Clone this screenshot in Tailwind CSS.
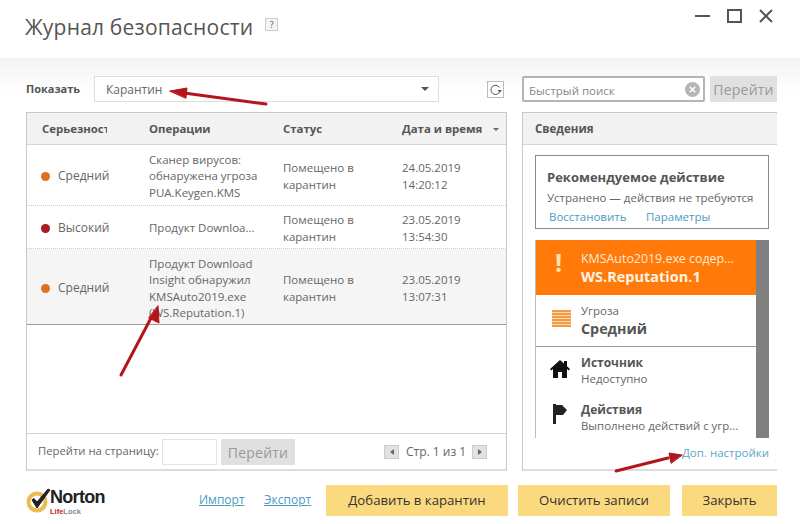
<!DOCTYPE html>
<html lang="ru">
<head>
  <meta charset="UTF-8" />
  <title>Журнал безопасности</title>
  <script src="https://cdn.jsdelivr.net/npm/@tailwindcss/browser@4"></script>
</head>
<body class="bg-white">
<div class="relative w-[800px] h-[524px] overflow-hidden bg-white text-[#666] text-[12px] font-['Open_Sans','Noto_Sans',sans-serif]">

  <!-- Title bar -->
  <header class="h-[58px] flex pl-[25px] pr-[27px]">
    <h1 class="text-[21px] leading-[28px] mt-[13px] text-[#555] tracking-[0.2px]">Журнал безопасности</h1>
    <span class="mt-[18px] ml-[12px] w-[13px] h-[13px] border border-[#ccc] bg-[#f4f4f4] text-[9px] leading-[11px] text-center text-[#555]">?</span>
    <div class="ml-auto flex gap-[17px] mt-[9px] h-[14px]">
      <svg width="15" height="14" viewBox="0 0 15 14"><path d="M0 7h15" stroke="#555" stroke-width="2"/></svg>
      <svg width="15" height="14" viewBox="0 0 15 14"><rect x="1" y="1" width="13" height="12" fill="none" stroke="#555" stroke-width="2"/></svg>
      <svg width="14" height="14" viewBox="0 0 14 14"><path d="M1 1l12 12M13 1L1 13" stroke="#555" stroke-width="2"/></svg>
    </div>
  </header>

  <main class="h-[427px] px-[26px] pr-[23px] pt-[18px] bg-gradient-to-b from-[#f3f3f3] via-white via-[8%] to-white">
    <!-- Toolbar -->
    <div class="flex h-[26px] items-center">
      <span class="w-[68px] font-bold text-[#555] text-[11px]">Показать</span>
      <div class="w-[345px] h-[26px] border border-[#ddd] bg-white flex items-center px-[11px] text-[12px]">
        <span class="mt-[1px]">Карантин</span>
        <span class="ml-auto -mr-[2px] w-0 h-0 border-x-[4px] border-x-transparent border-t-[4px] border-t-[#555]"></span>
      </div>
      <div class="ml-[48px] mt-[1px] w-[17px] h-[17px] border border-[#bbb] bg-white flex items-center justify-center">
        <svg width="13" height="13" viewBox="0 0 13 13"><path d="M10.5 4.500A4.600 4.600 0 1 0 11 8" fill="none" stroke="#555" stroke-width="1"/><path d="M8.500 7h4.500l-2.200 2.600z" fill="#555"/></svg>
      </div>
      <div class="ml-[18px] w-[183px] h-[26px] border-2 border-[#b4b4b4] rounded-[2px] bg-white flex items-center pl-[5px] pr-[3px] text-[11.5px] text-[#888]">
        <span class="mt-[3px]">Быстрый поиск</span>
        <span class="ml-auto w-[15px] h-[15px] rounded-full bg-[#b5b5b5] flex items-center justify-center">
          <svg width="7" height="7" viewBox="0 0 7 7"><path d="M.8.8l5.400 5.400M6.200.8L.8 6.200" stroke="#fff" stroke-width="1.500"/></svg>
        </span>
      </div>
      <div class="ml-[5px] w-[67px] h-[26px] bg-[#e0e0e0] text-[#999] text-[14px] leading-[27px] text-center tracking-[0.2px]">Перейти</div>
    </div>

    <div class="flex gap-[15px] mt-[10px] h-[359px]">
      <!-- Log table -->
      <section class="w-[481px] border border-[#c8c8c8] border-b-2 border-b-[#ddd] flex flex-col bg-white">
        <div class="h-[32px] bg-[#f2f2f2] border-b border-[#d4d4d4] flex items-center font-bold text-[#555] text-[11.400px] shrink-0">
          <div class="w-[122px] pl-[15px]"><div class="w-[65px] overflow-hidden whitespace-nowrap">Серьезность</div></div>
          <div class="w-[134px]">Операции</div>
          <div class="w-[119px]">Статус</div>
          <div class="flex-1 flex items-center">Дата и время<span class="ml-[11px] mt-[2px] w-0 h-0 border-x-[3.500px] border-x-transparent border-t-[3.500px] border-t-[#666]"></span></div>
        </div>

        <div class="h-[61px] pt-[3px] flex items-center border-b border-dotted border-[#ccc] leading-[16.500px] text-[11.500px]">
          <div class="w-[122px] pl-[14px] flex items-center gap-[8px] text-[12px]"><span class="w-[9px] h-[9px] rounded-full bg-[#dc7126]"></span>Средний</div>
          <div class="w-[134px]">Сканер вирусов:<br>обнаружена угроза<br>PUA.Keygen.KMS</div>
          <div class="w-[119px]">Помещено в<br>карантин</div>
          <div class="flex-1">24.05.2019<br>14:20:12</div>
        </div>
        <div class="h-[43px] pt-[3px] flex items-center border-b border-dotted border-[#ccc] leading-[16.500px] text-[11.500px]">
          <div class="w-[122px] pl-[14px] flex items-center gap-[8px] text-[12px]"><span class="w-[9px] h-[9px] rounded-full bg-[#a81c22]"></span>Высокий</div>
          <div class="w-[134px]">Продукт Downloa...</div>
          <div class="w-[119px]">Помещено в<br>карантин</div>
          <div class="flex-1">23.05.2019<br>13:54:30</div>
        </div>
        <div class="h-[76px] pt-[4px] flex items-center bg-[#f5f5f5] border-b border-[#9a9a9a] leading-[16.300px] text-[11.500px]">
          <div class="w-[122px] pl-[14px] flex items-center gap-[8px] text-[12px]"><span class="w-[9px] h-[9px] rounded-full bg-[#dc7126]"></span>Средний</div>
          <div class="w-[134px]">Продукт Download<br>Insight обнаружил<br>KMSAuto2019.exe<br>(WS.Reputation.1)</div>
          <div class="w-[119px]">Помещено в<br>карантин</div>
          <div class="flex-1">23.05.2019<br>13:07:31</div>
        </div>

        <!-- Pager -->
        <div class="mt-auto h-[36px] border-t border-[#d4d4d4] flex items-center pl-[11px] shrink-0">
          <span class="w-[124px] whitespace-nowrap text-[11.300px]">Перейти на страницу:</span>
          <span class="w-[55px] h-[26px] border border-[#e4e4e4] bg-white"></span>
          <span class="ml-[4px] w-[74px] h-[26px] bg-[#e0e0e0] text-[#999] text-[14px] leading-[27px] text-center tracking-[0.2px]">Перейти</span>
          <span class="ml-[89px] w-[15px] h-[14px] bg-[#e2e2e2] border border-[#ccc] flex items-center justify-center"><span class="w-0 h-0 border-y-[3px] border-y-transparent border-r-[4px] border-r-[#666]"></span></span>
          <span class="ml-[7px] w-[66px] whitespace-nowrap">Стр. 1 из 1</span>
          <span class="w-[15px] h-[14px] bg-[#e2e2e2] border border-[#ccc] flex items-center justify-center"><span class="w-0 h-0 border-y-[3px] border-y-transparent border-l-[4px] border-l-[#666]"></span></span>
        </div>
      </section>

      <!-- Details -->
      <section class="w-[255px] border border-r-0 border-[#c8c8c8] border-b-2 border-b-[#ddd] flex flex-col bg-white">
        <div class="h-[32px] bg-[#f2f2f2] border-b border-[#d4d4d4] pl-[12px] font-bold text-[#555] text-[11.500px] leading-[31px] shrink-0">Сведения</div>
        <div class="mt-[10px] ml-[12px] w-[234px] h-[74px] border border-[#8a8a8a] pl-[11px] pt-[11px] shrink-0">
          <div class="font-bold text-[13px] leading-[20px] text-[#555]">Рекомендуемое действие</div>
          <div class="text-[11.500px] leading-[18px] mt-[2px] whitespace-nowrap">Устранено — действия не требуются</div>
          <div class="flex text-[#4a9cbf] text-[11.500px] leading-[19px]"><span class="ml-[2px] w-[97px]">Восстановить</span><span>Параметры</span></div>
        </div>

        <div class="mt-[11px] ml-[12px] w-[234px] h-[198px] flex shrink-0 overflow-hidden border-l border-[#bbb]">
          <div class="w-[220px]">
            <div class="h-[55px] bg-[#ff7a0a] text-white flex">
              <span class="w-[45px] text-center text-[#ffe3b0] text-[25px] font-bold leading-[44px]">!</span>
              <div class="pt-[11px]">
                <div class="text-[12.400px] leading-[16px] text-[#ffe9cf] whitespace-nowrap">KMSAuto2019.exe содер...</div>
                <div class="text-[14.500px] leading-[20px] font-bold text-[#fff3e4]">WS.Reputation.1</div>
              </div>
            </div>
            <div class="h-[52px] border-b border-[#999] flex">
              <div class="w-[45px] pt-[15px] pl-[16px]">
                <div class="w-[19px] h-[17px] bg-[repeating-linear-gradient(#f39a45_0_2px,#fbd8b4_2px_3px)]"></div>
              </div>
              <div class="pt-[7px]">
                <div class="leading-[17px] text-[11.500px]">Угроза</div>
                <div class="text-[14.300px] leading-[20px] font-bold text-[#555]">Средний</div>
              </div>
            </div>
            <div class="h-[47px] flex">
              <div class="w-[45px] pt-[13px] pl-[14px]">
                <svg width="20" height="18" viewBox="0 0 20 18"><path d="M10 0L0 9l1.300 1.400L3 9v9h5v-6h4v6h5V9l1.700 1.400L20 9l-3-2.700V1h-3v2.600z" fill="#111"/></svg>
              </div>
              <div class="pt-[8px] leading-[16px]">
                <div class="font-bold text-[#555]">Источник</div>
                <div class="text-[11.500px]">Недоступно</div>
              </div>
            </div>
            <div class="flex">
              <div class="w-[45px] pt-[10px] pl-[17px]">
                <svg width="14" height="20" viewBox="0 0 14 20"><path d="M0 0h3v20H0zM3 1h6l5 5-4 5H3z" fill="#222"/></svg>
              </div>
              <div class="pt-[8px] leading-[16px]">
                <div class="font-bold text-[#555]">Действия</div>
                <div class="whitespace-nowrap text-[11.400px]">Выполнено действий с угр...</div>
              </div>
            </div>
          </div>
          <div class="w-[13px] h-full bg-[#808080]"></div>
        </div>
        <div class="text-right pr-[8px] text-[#5ba7c6] text-[11.500px] leading-[16px] mt-[7px]">Доп. настройки</div>
      </section>
    </div>
  </main>

  <!-- Footer -->
  <footer class="flex items-start pl-[26px] h-[39px]">
    <div class="w-[80px] h-[28px] mt-[2px] flex relative">
      <svg width="32" height="26" viewBox="0 0 32 26" class="-mr-[8px] shrink-0">
        <circle cx="11" cy="15" r="8.500" fill="none" stroke="#e8bd52" stroke-width="4"/>
        <path d="M6 13l5 8L24 3l-2-1L11 15l-3-3.500z" fill="#222" stroke="#222" stroke-width="1"/>
      </svg>
      <div class="mt-[1px]">
        <div class="font-['Liberation_Sans',sans-serif] font-bold text-[18px] leading-[19px] text-[#222] tracking-[-0.7px]">Norton</div>
        <div class="font-['Liberation_Sans',sans-serif] font-bold text-[7.500px] leading-[8px] text-[#888] whitespace-nowrap mt-[1px]"><span class="text-[#c8202f]">Life</span>Lock</div>
      </div>
    </div>
    <a class="ml-[93px] mt-[7px] w-[44px] underline text-[#4a9cbf] text-[12px] leading-[16px]">Импорт</a>
    <a class="ml-[21px] mt-[7px] w-[45px] underline text-[#4a9cbf] text-[12px] leading-[16px]">Экспорт</a>
    <button class="ml-[17px] w-[182px] h-[31px] bg-[#fbd97f] text-[#333] text-[13.200px]">Добавить в карантин</button>
    <button class="ml-[10px] w-[152px] h-[31px] bg-[#fbd97f] text-[#333] text-[13.200px]">Очистить записи</button>
    <button class="ml-[12px] w-[95px] h-[31px] bg-[#fbd97f] text-[#333] text-[13.200px]">Закрыть</button>
  </footer>

  <!-- Red annotation arrows -->
  <svg class="absolute inset-0 pointer-events-none" width="800" height="524" viewBox="0 0 800 524">
    <g fill="#b3151c" stroke="#b3151c" stroke-linecap="round">
      <path d="M266 104L184 93" stroke-width="3" fill="none"/>
      <path d="M170 91l17-3-1 10z" stroke-width="1"/>
      <path d="M121 375L151 318" stroke-width="3" fill="none"/>
      <path d="M158 306l1 17-10-5z" stroke-width="1"/>
      <path d="M616 471L668 458" stroke-width="3" fill="none"/>
      <path d="M682 455l-13-2 2 10z" stroke-width="1"/>
    </g>
  </svg>
</div>
</body>
</html>
